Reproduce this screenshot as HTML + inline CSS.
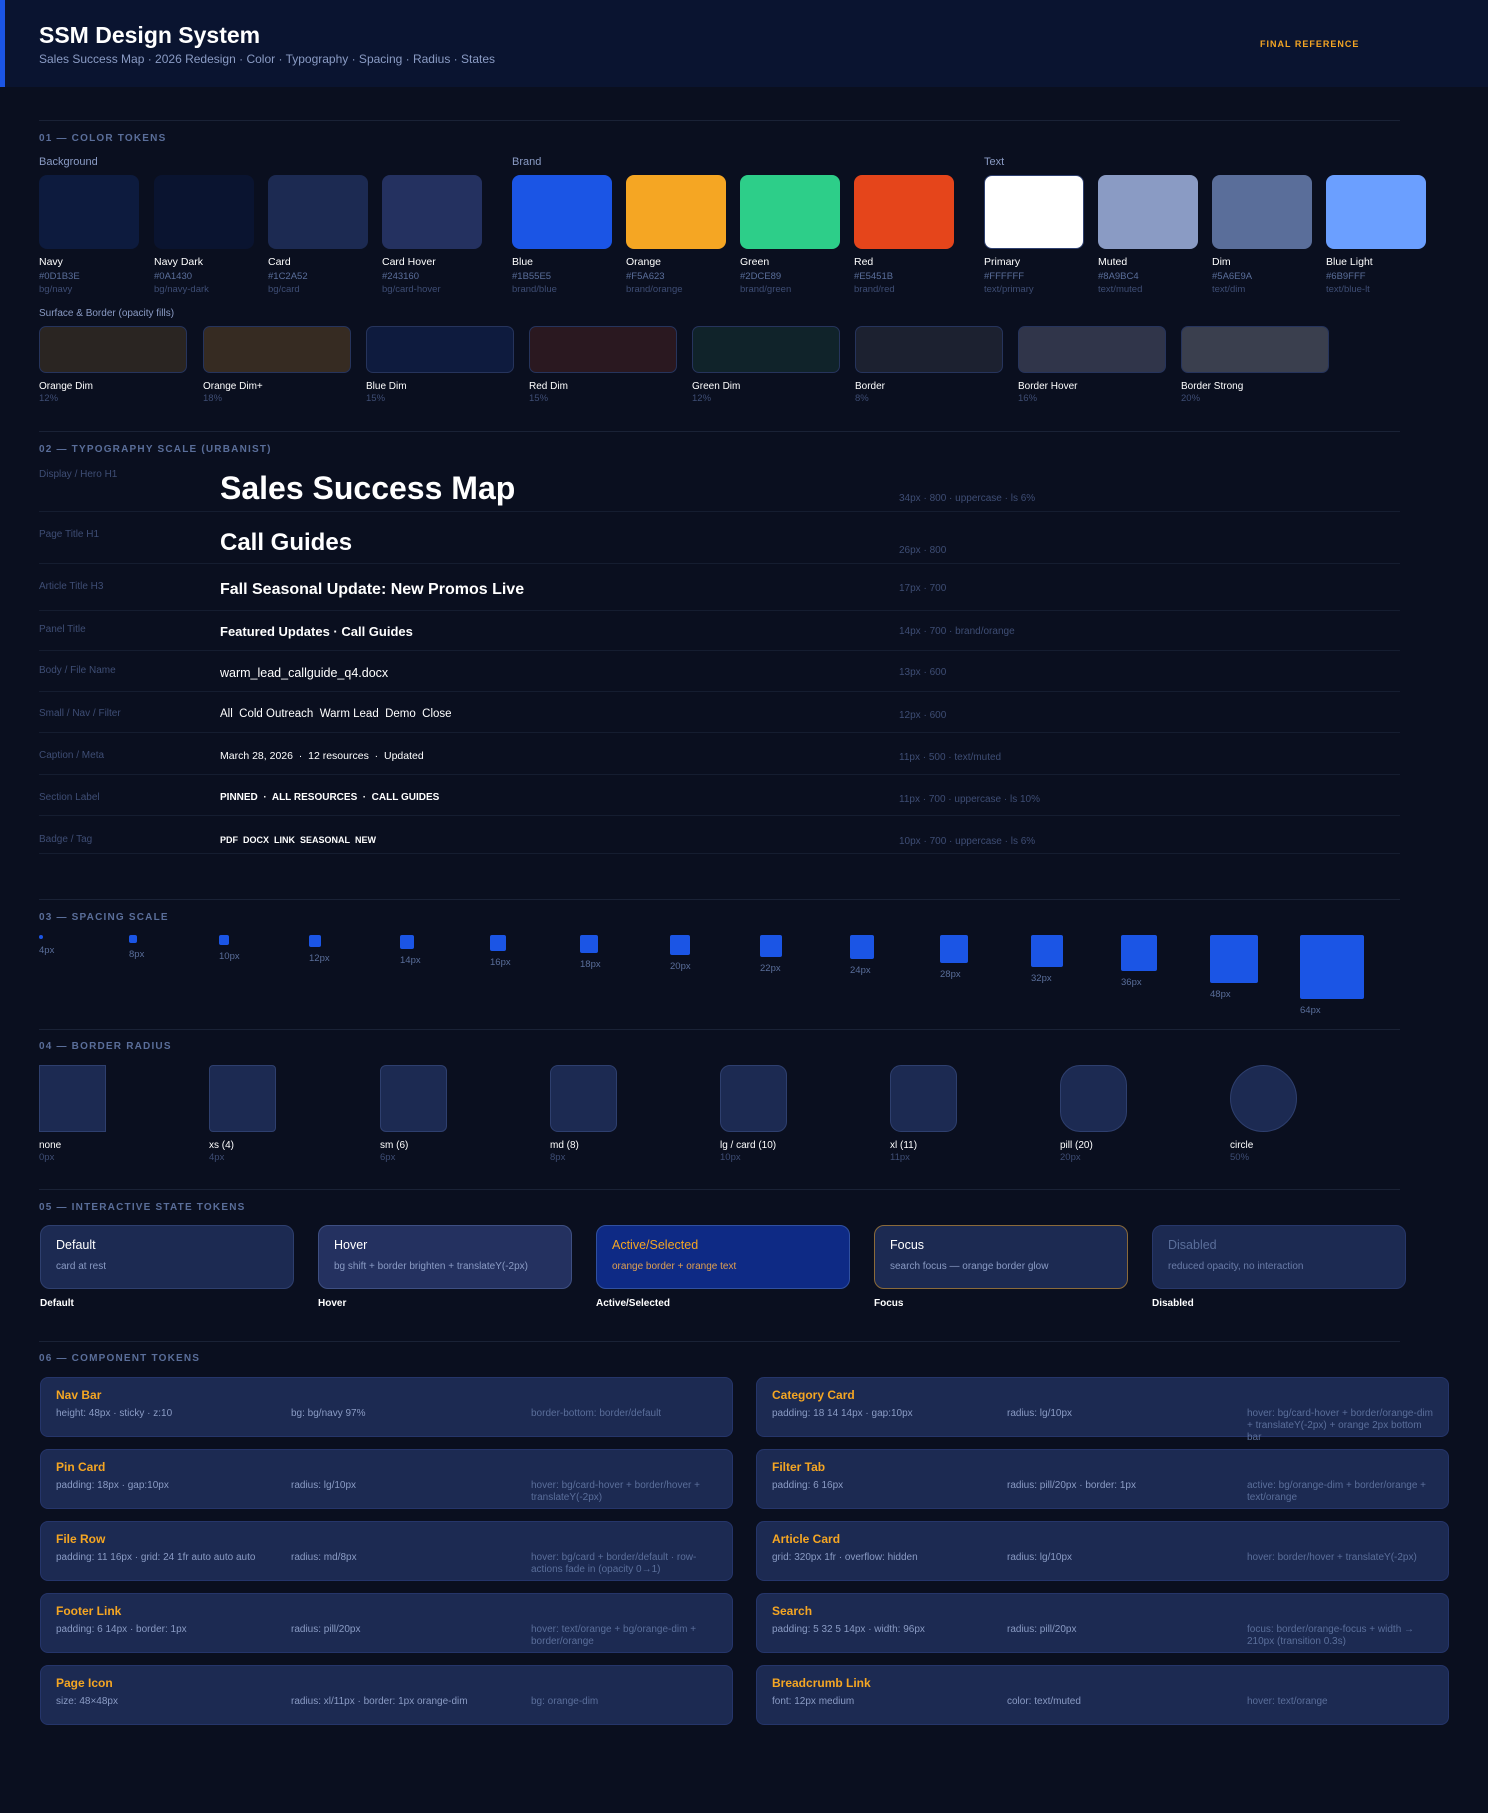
<!DOCTYPE html>
<html><head><meta charset="utf-8"><style>
*{margin:0;padding:0;box-sizing:border-box}
body{width:1488px;height:1813px;background:#0a0f1f;font-family:"Liberation Sans",sans-serif;color:#fff;position:relative;overflow:hidden}
.a{position:absolute;white-space:nowrap}
.hdr{position:absolute;left:0;top:0;width:1488px;height:87px;background:#0a1430}
.bar{position:absolute;left:0;top:0;width:5px;height:87px;background:#1b55e5}
.div{position:absolute;left:39px;width:1361px;height:1px;background:#1a2236}
.sec{position:absolute;left:39px;font-size:10px;font-weight:700;letter-spacing:1.2px;color:#5a6e9a}
.grp{position:absolute;font-size:11px;color:#8a9bc4}
.sw{position:absolute;width:100px;height:74px;border-radius:8px}
.nm{position:absolute;font-size:10.5px;color:#fff;white-space:nowrap}
.hx{position:absolute;font-size:9.5px;color:#5a6e9a}
.tk{position:absolute;font-size:9.5px;color:#3e4d74}
.ss{position:absolute;width:148px;height:47px;border-radius:7px;border:1px solid #26345c}
.tl{position:absolute;left:39px;font-size:10px;color:#3e4d74}
.tm{position:absolute;left:899px;font-size:10px;color:#3e4d74;white-space:nowrap}
.ts{position:absolute;left:220px;color:#fff;font-weight:700;white-space:nowrap}
.tline{position:absolute;left:39px;width:1361px;height:1px;background:#151d30}
.sq{position:absolute;background:#1b55e5;border-radius:2px}
.sl{position:absolute;font-size:9.5px;color:#5a6e9a}
.rb{position:absolute;top:1065px;width:67px;height:67px;background:#1c2a52;border:1px solid #2e3f6e}
.st{position:absolute;top:1225px;width:254px;height:64px;border-radius:10px;background:#1c2a52;border:1px solid #2e3f6e}
.st b{position:absolute;left:15px;top:12px;font-size:12.5px;font-weight:400;white-space:nowrap}
.st i{position:absolute;left:15px;top:35px;font-size:10px;font-style:normal;color:#8a9bc4;white-space:nowrap}
.stl{position:absolute;top:1298px;font-size:10px;font-weight:700}
.cc{position:absolute;width:693px;height:60px;border-radius:8px;background:#1c2a52;border:1px solid #25356a}
.cc b{position:absolute;left:15px;top:10px;font-size:12px;color:#f5a623;white-space:nowrap}
.cc span{position:absolute;top:30px;font-size:10px;color:#8a9bc4;line-height:12px;white-space:nowrap}
.cc .c1{left:15px}.cc .c2{left:250px}.cc .c3{left:490px;width:190px;white-space:normal;color:#5a6e9a}
</style></head><body>
<div class="hdr"></div><div class="bar"></div>
<div class="a" style="left:39px;top:22px;font-size:23px;font-weight:700">SSM Design System</div>
<div class="a" style="left:39px;top:52px;font-size:12px;color:#8a9bc4">Sales Success Map · 2026 Redesign · Color · Typography · Spacing · Radius · States</div>
<div class="a" style="left:1260px;top:39px;font-size:9px;font-weight:700;letter-spacing:1px;color:#f5a623">FINAL REFERENCE</div>

<div class="div" style="top:120px"></div>
<div class="sec" style="top:133px">01 — COLOR TOKENS</div>
<div class="grp" style="left:39px;top:156px">Background</div>
<div class="grp" style="left:512px;top:156px">Brand</div>
<div class="grp" style="left:984px;top:156px">Text</div>

<div class="sw" style="left:39px;top:175px;background:#0d1b3e"></div>
<div class="sw" style="left:154px;top:175px;background:#0a1430"></div>
<div class="sw" style="left:268px;top:175px;background:#1c2a52"></div>
<div class="sw" style="left:382px;top:175px;background:#243160"></div>
<div class="sw" style="left:512px;top:175px;background:#1b55e5"></div>
<div class="sw" style="left:626px;top:175px;background:#f5a623"></div>
<div class="sw" style="left:740px;top:175px;background:#2dce89"></div>
<div class="sw" style="left:854px;top:175px;background:#e5451b"></div>
<div class="sw" style="left:984px;top:175px;background:#fff;border:1px solid #2e3f6e"></div>
<div class="sw" style="left:1098px;top:175px;background:#8a9bc4"></div>
<div class="sw" style="left:1212px;top:175px;background:#5a6e9a"></div>
<div class="sw" style="left:1326px;top:175px;background:#6b9fff"></div>

<div class="nm" style="left:39px;top:256px">Navy</div><div class="hx" style="left:39px;top:271px">#0D1B3E</div><div class="tk" style="left:39px;top:284px">bg/navy</div>
<div class="nm" style="left:154px;top:256px">Navy Dark</div><div class="hx" style="left:154px;top:271px">#0A1430</div><div class="tk" style="left:154px;top:284px">bg/navy-dark</div>
<div class="nm" style="left:268px;top:256px">Card</div><div class="hx" style="left:268px;top:271px">#1C2A52</div><div class="tk" style="left:268px;top:284px">bg/card</div>
<div class="nm" style="left:382px;top:256px">Card Hover</div><div class="hx" style="left:382px;top:271px">#243160</div><div class="tk" style="left:382px;top:284px">bg/card-hover</div>
<div class="nm" style="left:512px;top:256px">Blue</div><div class="hx" style="left:512px;top:271px">#1B55E5</div><div class="tk" style="left:512px;top:284px">brand/blue</div>
<div class="nm" style="left:626px;top:256px">Orange</div><div class="hx" style="left:626px;top:271px">#F5A623</div><div class="tk" style="left:626px;top:284px">brand/orange</div>
<div class="nm" style="left:740px;top:256px">Green</div><div class="hx" style="left:740px;top:271px">#2DCE89</div><div class="tk" style="left:740px;top:284px">brand/green</div>
<div class="nm" style="left:854px;top:256px">Red</div><div class="hx" style="left:854px;top:271px">#E5451B</div><div class="tk" style="left:854px;top:284px">brand/red</div>
<div class="nm" style="left:984px;top:256px">Primary</div><div class="hx" style="left:984px;top:271px">#FFFFFF</div><div class="tk" style="left:984px;top:284px">text/primary</div>
<div class="nm" style="left:1098px;top:256px">Muted</div><div class="hx" style="left:1098px;top:271px">#8A9BC4</div><div class="tk" style="left:1098px;top:284px">text/muted</div>
<div class="nm" style="left:1212px;top:256px">Dim</div><div class="hx" style="left:1212px;top:271px">#5A6E9A</div><div class="tk" style="left:1212px;top:284px">text/dim</div>
<div class="nm" style="left:1326px;top:256px">Blue Light</div><div class="hx" style="left:1326px;top:271px">#6B9FFF</div><div class="tk" style="left:1326px;top:284px">text/blue-lt</div>

<div class="grp" style="left:39px;top:308px;font-size:10px">Surface &amp; Border (opacity fills)</div>
<div class="ss" style="left:39px;top:326px;background:#2a2522"></div>
<div class="ss" style="left:203px;top:326px;background:#362b22"></div>
<div class="ss" style="left:366px;top:326px;background:#0e1b3e"></div>
<div class="ss" style="left:529px;top:326px;background:#2a1820"></div>
<div class="ss" style="left:692px;top:326px;background:#10232a"></div>
<div class="ss" style="left:855px;top:326px;background:#1c2130"></div>
<div class="ss" style="left:1018px;top:326px;background:#30354a"></div>
<div class="ss" style="left:1181px;top:326px;background:#3a3f4e"></div>
<div class="nm" style="left:39px;top:381px;font-size:10px">Orange Dim</div><div class="tk" style="left:39px;top:393px">12%</div>
<div class="nm" style="left:203px;top:381px;font-size:10px">Orange Dim+</div><div class="tk" style="left:203px;top:393px">18%</div>
<div class="nm" style="left:366px;top:381px;font-size:10px">Blue Dim</div><div class="tk" style="left:366px;top:393px">15%</div>
<div class="nm" style="left:529px;top:381px;font-size:10px">Red Dim</div><div class="tk" style="left:529px;top:393px">15%</div>
<div class="nm" style="left:692px;top:381px;font-size:10px">Green Dim</div><div class="tk" style="left:692px;top:393px">12%</div>
<div class="nm" style="left:855px;top:381px;font-size:10px">Border</div><div class="tk" style="left:855px;top:393px">8%</div>
<div class="nm" style="left:1018px;top:381px;font-size:10px">Border Hover</div><div class="tk" style="left:1018px;top:393px">16%</div>
<div class="nm" style="left:1181px;top:381px;font-size:10px">Border Strong</div><div class="tk" style="left:1181px;top:393px">20%</div>

<div class="div" style="top:431px"></div>
<div class="sec" style="top:444px">02 — TYPOGRAPHY SCALE (URBANIST)</div>
<div class="tl" style="top:469px">Display / Hero H1</div><div class="ts" style="top:470px;font-size:32px">Sales Success Map</div><div class="tm" style="top:493px">34px · 800 · uppercase · ls 6%</div>
<div class="tline" style="top:511px"></div>
<div class="tl" style="top:529px">Page Title H1</div><div class="ts" style="top:529px;font-size:24px">Call Guides</div><div class="tm" style="top:545px">26px · 800</div>
<div class="tline" style="top:563px"></div>
<div class="tl" style="top:581px">Article Title H3</div><div class="ts" style="top:581px;font-size:16px">Fall Seasonal Update: New Promos Live</div><div class="tm" style="top:583px">17px · 700</div>
<div class="tline" style="top:610px"></div>
<div class="tl" style="top:624px">Panel Title</div><div class="ts" style="top:624px;font-size:13px">Featured Updates · Call Guides</div><div class="tm" style="top:626px">14px · 700 · brand/orange</div>
<div class="tline" style="top:650px"></div>
<div class="tl" style="top:665px">Body / File Name</div><div class="ts" style="top:666px;font-size:12.5px;font-weight:400">warm_lead_callguide_q4.docx</div><div class="tm" style="top:667px">13px · 600</div>
<div class="tline" style="top:691px"></div>
<div class="tl" style="top:708px">Small / Nav / Filter</div><div class="ts" style="top:708px;font-size:11.5px;font-weight:400">All&nbsp; Cold Outreach&nbsp; Warm Lead&nbsp; Demo&nbsp; Close</div><div class="tm" style="top:710px">12px · 600</div>
<div class="tline" style="top:732px"></div>
<div class="tl" style="top:750px">Caption / Meta</div><div class="ts" style="top:750px;font-size:10.5px;font-weight:400">March 28, 2026 &nbsp;·&nbsp; 12 resources &nbsp;·&nbsp; Updated</div><div class="tm" style="top:752px">11px · 500 · text/muted</div>
<div class="tline" style="top:774px"></div>
<div class="tl" style="top:792px">Section Label</div><div class="ts" style="top:792px;font-size:10px">PINNED &nbsp;·&nbsp; ALL RESOURCES &nbsp;·&nbsp; CALL GUIDES</div><div class="tm" style="top:794px">11px · 700 · uppercase · ls 10%</div>
<div class="tline" style="top:815px"></div>
<div class="tl" style="top:834px">Badge / Tag</div><div class="ts" style="top:835px;font-size:9px">PDF&nbsp; DOCX&nbsp; LINK&nbsp; SEASONAL&nbsp; NEW</div><div class="tm" style="top:836px">10px · 700 · uppercase · ls 6%</div>
<div class="tline" style="top:853px"></div>

<div class="div" style="top:899px"></div>
<div class="sec" style="top:912px">03 — SPACING SCALE</div>
<div class="sq" style="left:39px;top:935px;width:4px;height:4px"></div><div class="sl" style="left:39px;top:945px">4px</div>
<div class="sq" style="left:129px;top:935px;width:8px;height:8px"></div><div class="sl" style="left:129px;top:949px">8px</div>
<div class="sq" style="left:219px;top:935px;width:10px;height:10px"></div><div class="sl" style="left:219px;top:951px">10px</div>
<div class="sq" style="left:309px;top:935px;width:12px;height:12px"></div><div class="sl" style="left:309px;top:953px">12px</div>
<div class="sq" style="left:400px;top:935px;width:14px;height:14px"></div><div class="sl" style="left:400px;top:955px">14px</div>
<div class="sq" style="left:490px;top:935px;width:16px;height:16px"></div><div class="sl" style="left:490px;top:957px">16px</div>
<div class="sq" style="left:580px;top:935px;width:18px;height:18px"></div><div class="sl" style="left:580px;top:959px">18px</div>
<div class="sq" style="left:670px;top:935px;width:20px;height:20px"></div><div class="sl" style="left:670px;top:961px">20px</div>
<div class="sq" style="left:760px;top:935px;width:22px;height:22px"></div><div class="sl" style="left:760px;top:963px">22px</div>
<div class="sq" style="left:850px;top:935px;width:24px;height:24px"></div><div class="sl" style="left:850px;top:965px">24px</div>
<div class="sq" style="left:940px;top:935px;width:28px;height:28px"></div><div class="sl" style="left:940px;top:969px">28px</div>
<div class="sq" style="left:1031px;top:935px;width:32px;height:32px"></div><div class="sl" style="left:1031px;top:973px">32px</div>
<div class="sq" style="left:1121px;top:935px;width:36px;height:36px"></div><div class="sl" style="left:1121px;top:977px">36px</div>
<div class="sq" style="left:1210px;top:935px;width:48px;height:48px"></div><div class="sl" style="left:1210px;top:989px">48px</div>
<div class="sq" style="left:1300px;top:935px;width:64px;height:64px"></div><div class="sl" style="left:1300px;top:1005px">64px</div>

<div class="div" style="top:1029px"></div>
<div class="sec" style="top:1041px">04 — BORDER RADIUS</div>
<div class="rb" style="left:39px;border-radius:0"></div>
<div class="rb" style="left:209px;border-radius:4px"></div>
<div class="rb" style="left:380px;border-radius:6px"></div>
<div class="rb" style="left:550px;border-radius:8px"></div>
<div class="rb" style="left:720px;border-radius:10px"></div>
<div class="rb" style="left:890px;border-radius:11px"></div>
<div class="rb" style="left:1060px;border-radius:20px"></div>
<div class="rb" style="left:1230px;border-radius:50%"></div>
<div class="nm" style="left:39px;top:1140px;font-size:10px">none</div><div class="tk" style="left:39px;top:1152px">0px</div>
<div class="nm" style="left:209px;top:1140px;font-size:10px">xs (4)</div><div class="tk" style="left:209px;top:1152px">4px</div>
<div class="nm" style="left:380px;top:1140px;font-size:10px">sm (6)</div><div class="tk" style="left:380px;top:1152px">6px</div>
<div class="nm" style="left:550px;top:1140px;font-size:10px">md (8)</div><div class="tk" style="left:550px;top:1152px">8px</div>
<div class="nm" style="left:720px;top:1140px;font-size:10px">lg / card (10)</div><div class="tk" style="left:720px;top:1152px">10px</div>
<div class="nm" style="left:890px;top:1140px;font-size:10px">xl (11)</div><div class="tk" style="left:890px;top:1152px">11px</div>
<div class="nm" style="left:1060px;top:1140px;font-size:10px">pill (20)</div><div class="tk" style="left:1060px;top:1152px">20px</div>
<div class="nm" style="left:1230px;top:1140px;font-size:10px">circle</div><div class="tk" style="left:1230px;top:1152px">50%</div>

<div class="div" style="top:1189px"></div>
<div class="sec" style="top:1202px">05 — INTERACTIVE STATE TOKENS</div>
<div class="st" style="left:40px"><b>Default</b><i>card at rest</i></div>
<div class="st" style="left:318px;background:#243160;border-color:#3e4f82"><b>Hover</b><i>bg shift + border brighten + translateY(-2px)</i></div>
<div class="st" style="left:596px;background:#0e2a85;border-color:#3050a0"><b style="color:#f5a623">Active/Selected</b><i style="color:#e0a050">orange border + orange text</i></div>
<div class="st" style="left:874px;border-color:#8a6a3a"><b>Focus</b><i>search focus — orange border glow</i></div>
<div class="st" style="left:1152px;border-color:#27376a"><b style="color:#5a6e9a">Disabled</b><i style="color:#6a7ca8">reduced opacity, no interaction</i></div>
<div class="stl" style="left:40px">Default</div>
<div class="stl" style="left:318px">Hover</div>
<div class="stl" style="left:596px">Active/Selected</div>
<div class="stl" style="left:874px">Focus</div>
<div class="stl" style="left:1152px">Disabled</div>

<div class="div" style="top:1341px"></div>
<div class="sec" style="top:1353px">06 — COMPONENT TOKENS</div>

<div class="cc" style="left:40px;top:1377px"><b>Nav Bar</b><span class="c1">height: 48px · sticky · z:10</span><span class="c2">bg: bg/navy 97%</span><span class="c3">border-bottom: border/default</span></div>
<div class="cc" style="left:756px;top:1377px"><b>Category Card</b><span class="c1">padding: 18 14 14px · gap:10px</span><span class="c2">radius: lg/10px</span><span class="c3">hover: bg/card-hover + border/orange-dim + translateY(-2px) + orange 2px bottom bar</span></div>
<div class="cc" style="left:40px;top:1449px"><b>Pin Card</b><span class="c1">padding: 18px · gap:10px</span><span class="c2">radius: lg/10px</span><span class="c3">hover: bg/card-hover + border/hover + translateY(-2px)</span></div>
<div class="cc" style="left:756px;top:1449px"><b>Filter Tab</b><span class="c1">padding: 6 16px</span><span class="c2">radius: pill/20px · border: 1px</span><span class="c3">active: bg/orange-dim + border/orange + text/orange</span></div>
<div class="cc" style="left:40px;top:1521px"><b>File Row</b><span class="c1">padding: 11 16px · grid: 24 1fr auto auto auto</span><span class="c2">radius: md/8px</span><span class="c3">hover: bg/card + border/default · row-actions fade in (opacity 0→1)</span></div>
<div class="cc" style="left:756px;top:1521px"><b>Article Card</b><span class="c1">grid: 320px 1fr · overflow: hidden</span><span class="c2">radius: lg/10px</span><span class="c3">hover: border/hover + translateY(-2px)</span></div>
<div class="cc" style="left:40px;top:1593px"><b>Footer Link</b><span class="c1">padding: 6 14px · border: 1px</span><span class="c2">radius: pill/20px</span><span class="c3">hover: text/orange + bg/orange-dim + border/orange</span></div>
<div class="cc" style="left:756px;top:1593px"><b>Search</b><span class="c1">padding: 5 32 5 14px · width: 96px</span><span class="c2">radius: pill/20px</span><span class="c3">focus: border/orange-focus + width → 210px (transition 0.3s)</span></div>
<div class="cc" style="left:40px;top:1665px"><b>Page Icon</b><span class="c1">size: 48×48px</span><span class="c2">radius: xl/11px · border: 1px orange-dim</span><span class="c3">bg: orange-dim</span></div>
<div class="cc" style="left:756px;top:1665px"><b>Breadcrumb Link</b><span class="c1">font: 12px medium</span><span class="c2">color: text/muted</span><span class="c3">hover: text/orange</span></div>
</body></html>
